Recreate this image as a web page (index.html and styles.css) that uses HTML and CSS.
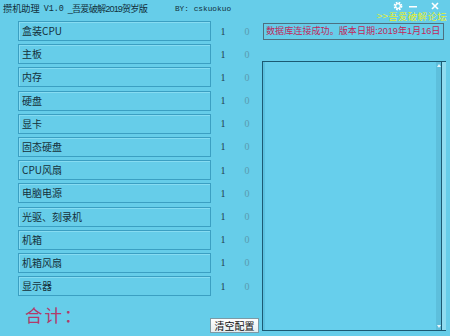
FILE: index.html
```html
<!DOCTYPE html>
<html>
<head>
<meta charset="utf-8">
<link rel="stylesheet" href="styles.css">
</head>
<body>
<div class="win">
  <div class="header">
    <div class="title">
      <span class="t-cn">攒机助理</span><span class="t-mono">V1.0</span><span class="t-cn2">_吾爱破解2019贺岁版</span>
    </div>
    <div class="by">BY: cskuokuo</div>
    <div class="hright">
      <div class="ctrls">
        <svg class="ic gear" width="10" height="10" viewBox="0 0 10 10"><circle cx="5" cy="5" r="3.4" fill="none" stroke="#fff" stroke-width="2" stroke-dasharray="1.6 1.1"/><circle cx="5" cy="5" r="2.3" fill="none" stroke="#fff" stroke-width="1.2"/></svg>
        <svg class="ic min" width="10" height="10" viewBox="0 0 10 10"><rect x="1" y="5" width="8" height="1.5" fill="#fff"/></svg>
        <svg class="ic close" width="10" height="10" viewBox="0 0 10 10"><path d="M2 2L8 8M8 2L2 8" stroke="#fff" stroke-width="1.6"/></svg>
      </div>
      <div class="link">&gt;&gt;吾爱破解论坛</div>
    </div>
  </div>
  <div class="main">
    <div class="left">
      <div class="row"><div class="item">盒装CPU</div><div class="n1">1</div><div class="n0">0</div></div>
      <div class="row"><div class="item">主板</div><div class="n1">1</div><div class="n0">0</div></div>
      <div class="row"><div class="item">内存</div><div class="n1">1</div><div class="n0">0</div></div>
      <div class="row"><div class="item">硬盘</div><div class="n1">1</div><div class="n0">0</div></div>
      <div class="row"><div class="item">显卡</div><div class="n1">1</div><div class="n0">0</div></div>
      <div class="row"><div class="item">固态硬盘</div><div class="n1">1</div><div class="n0">0</div></div>
      <div class="row"><div class="item">CPU风扇</div><div class="n1">1</div><div class="n0">0</div></div>
      <div class="row"><div class="item">电脑电源</div><div class="n1">1</div><div class="n0">0</div></div>
      <div class="row"><div class="item">光驱、刻录机</div><div class="n1">1</div><div class="n0">0</div></div>
      <div class="row"><div class="item">机箱</div><div class="n1">1</div><div class="n0">0</div></div>
      <div class="row"><div class="item">机箱风扇</div><div class="n1">1</div><div class="n0">0</div></div>
      <div class="row"><div class="item">显示器</div><div class="n1">1</div><div class="n0">0</div></div>
      <div class="footer">
        <div class="total">合计：</div>
        <button class="btn">清空配置</button>
      </div>
    </div>
    <div class="right">
      <div class="status">数据库连接成功。版本日期:2019年1月16日</div>
      <div class="memo">
        <div class="memo-body"></div>
        <div class="scroll"><span class="up"></span><span class="down"></span></div>
      </div>
    </div>
  </div>
</div>
</body>
</html>
```

FILE: styles.css
```css
* { box-sizing: border-box; }
html, body { margin: 0; padding: 0; }
body {
  width: 450px;
  height: 336px;
  overflow: hidden;
  background: #66cde9;
  font-family: "Noto Sans CJK SC", "DejaVu Sans", sans-serif;
  color: #1c2a33;
}
.win { width: 450px; height: 336px; display: flex; flex-direction: column; }
.header {
  height: 21px;
  display: flex;
  align-items: flex-start;
}
.title {
  margin-left: 3px;
  margin-top: 2px;
  font-family: "Liberation Sans", "Noto Sans CJK SC", sans-serif;
  font-size: 9.2px;
  line-height: 14px;
  color: #12303c;
  display: flex;
  white-space: nowrap;
}
.t-mono { font-family: "Liberation Mono", monospace; font-size: 8.4px; margin: 0 4px 0 4px; }
.t-cn2 { letter-spacing: -0.9px; }
.by {
  margin-left: 28px;
  margin-top: 2px;
  font-family: "Liberation Mono", monospace;
  font-size: 7.8px;
  line-height: 14px;
  color: #12303c;
}
.hright {
  margin-left: auto;
  display: flex;
  flex-direction: column;
  align-items: flex-end;
  padding-right: 3px;
}
.ctrls { display: flex; height: 11px; align-items: center; padding-right: 7px; }
.ic { display: block; }
.min { margin-left: 5px; }
.close { margin-left: 12px; }
.link {
  font-size: 9.5px;
  line-height: 10px;
  color: #e6f02c;
  letter-spacing: 0.3px;
}
.main { display: flex; flex: 1; }
.left { width: 263px; padding-left: 18px; display: flex; flex-direction: column; }
.row { display: flex; height: 20px; margin-bottom: 3.2px; align-items: center; }
.item {
  width: 193px;
  height: 20px;
  border: 1px solid #3b9fc2;
  box-shadow: inset 1px 1px 0 #86dcf2;
  font-size: 10px;
  line-height: 18px;
  padding-left: 3px;
  color: #15303a;
}
.n1, .n0 {
  width: 24px;
  text-align: center;
  font-family: "Liberation Serif", serif;
  font-size: 10px;
}
.n1 { color: #24414d; }
.n0 { color: #5a9bb0; }
.footer { display: flex; align-items: flex-start; flex: 1; }
.total {
  margin-left: 7px;
  margin-top: 5px;
  font-size: 17.5px;
  line-height: 22px;
  color: #b33a6a;
  letter-spacing: 2px;
}
.btn {
  margin-left: auto;
  margin-right: 4px;
  margin-top: 19px;
  width: 49px;
  height: 15px;
  padding: 0;
  border: 1px solid #7d9aa5;
  background: linear-gradient(#ffffff, #e4ecef);
  font-family: "Noto Sans CJK SC", sans-serif;
  font-size: 10px;
  line-height: 13px;
  color: #111;
}
.right { width: 187px; display: flex; flex-direction: column; }
.status {
  margin-top: 2px;
  width: 181px;
  height: 17px;
  border: 1px solid #4d6f80;
  font-family: "Liberation Sans", "Noto Sans CJK SC", sans-serif;
  font-size: 9.1px;
  line-height: 15px;
  color: #c0285a;
  padding-left: 2px;
  white-space: nowrap;
}
.memo {
  margin-top: 21px;
  margin-left: -1px;
  width: 184px;
  height: 270px;
  border: 1px solid #1b5a73;
  border-right: none;
  display: flex;
  background: #67cfec;
}
.memo-body { flex: 1; border-left: 2px solid #5bc0de; }
.scroll {
  width: 10px;
  position: relative;
  background: linear-gradient(90deg, #5dbfdc 0, #5dbfdc 5px, #1b5a73 5px, #1b5a73 6px, #8fdcf0 6px);
}
.up, .down {
  position: absolute;
  left: 1px;
  width: 0; height: 0;
  border-left: 2px solid transparent;
  border-right: 2px solid transparent;
}
.up { top: 2px; border-bottom: 3px solid #e8f6fb; }
.down { bottom: 2px; border-top: 3px solid #e8f6fb; }
```
